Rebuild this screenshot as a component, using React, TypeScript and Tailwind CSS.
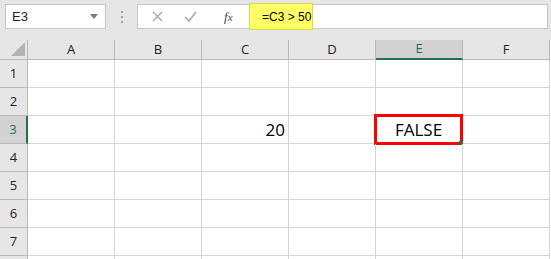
import React from 'react';

const cols = ['A', 'B', 'C', 'D', 'E', 'F'];
const rows = [1, 2, 3, 4, 5, 6, 7, 8];

export default function App() {
  return (
    <div className="w-[551px] h-[259px] overflow-hidden bg-[#e6e6e6] font-['Open_Sans',sans-serif]">
      {/* formula bar */}
      <div className="h-[40px] flex items-start pt-[4px] pl-[5px] pr-[3px]">
        <div className="w-[101px] h-[25px] bg-white border border-[#c6c6c6] flex items-center justify-between pl-[6px] pr-[7px]">
          <span className="text-[13px] text-[#222] font-['Liberation_Sans',sans-serif]">E3</span>
          <svg width="8" height="5" viewBox="0 0 8 5"><path d="M0 0h8L4 5z" fill="#7a7a7a" /></svg>
        </div>
        <div className="w-[31px] h-[25px] flex flex-col items-center justify-center gap-[3px]">
          <span className="w-[2px] h-[2px] bg-[#a0a0a0]" />
          <span className="w-[2px] h-[2px] bg-[#a0a0a0]" />
          <span className="w-[2px] h-[2px] bg-[#a0a0a0]" />
        </div>
        <div className="flex-1 h-[25px] bg-white border border-[#c6c6c6] flex items-center">
          <div className="w-[111px] flex items-center">
            <svg className="ml-[14px]" width="11" height="11" viewBox="0 0 11 11">
              <path d="M1 1l9 9M10 1l-9 9" stroke="#a8a8a8" strokeWidth="1.4" />
            </svg>
            <svg className="ml-[21px]" width="13" height="11" viewBox="0 0 13 11">
              <path d="M1 6l4 4 7-9" stroke="#a8a8a8" strokeWidth="1.6" fill="none" />
            </svg>
            <span className="ml-[27px] text-[13px] italic text-[#444] font-['Liberation_Serif',serif]">f<span className="text-[11px]">x</span></span>
          </div>
          <div className="h-[27px] -my-px w-[64px] bg-[#ffff66] border border-[#d9d94a] flex items-center pl-[12px]">
            <span className="text-[12px] text-black font-['Liberation_Sans',sans-serif] whitespace-nowrap">=C3 &gt; 50</span>
          </div>
        </div>
      </div>

      {/* sheet grid */}
      <div className="grid grid-cols-[28px_repeat(6,87px)] grid-rows-[20px_repeat(8,28px)] bg-white w-[551px]">
        <div className="bg-[#e6e6e6] border-r border-b border-[#b8b8b8] flex items-end justify-end pr-[2px] pb-[3px]">
          <svg width="14" height="14" viewBox="0 0 14 14"><path d="M14 0V14H0z" fill="#b4b4b4" /></svg>
        </div>
        {cols.map((c) => (
          <div
            key={c}
            className={
              c === 'E'
                ? 'bg-[#d3d3d3] border-r border-[#b8b8b8] border-b-2 border-b-[#217346] flex items-center justify-center text-[13px] text-[#217346]'
                : 'bg-[#e6e6e6] border-r border-b border-[#b8b8b8] flex items-center justify-center text-[13px] text-[#222]'
            }
          >
            {c}
          </div>
        ))}
        {rows.map((r) => (
          <React.Fragment key={r}>
            <div
              className={
                r === 3
                  ? 'bg-[#d3d3d3] border-r-2 border-r-[#217346] border-b border-[#b8b8b8] flex items-center justify-center text-[13px] text-[#217346]'
                  : 'bg-[#e6e6e6] border-r border-b border-[#b8b8b8] flex items-center justify-center text-[13px] text-[#222]'
              }
            >
              {r < 8 ? r : ''}
            </div>
            {cols.map((c) => (
              <div key={c} className="border-r border-b border-[#d4d4d4] relative flex items-center">
                {r === 3 && c === 'C' && (
                  <span className="ml-auto pr-[3px] text-[17px] text-black">20</span>
                )}
                {r === 3 && c === 'E' && (
                  <div className="absolute -left-[2px] -top-[2px] w-[89px] h-[31px] border-[3px] border-[#ff0000] flex items-center justify-center">
                    <span className="text-[17px] text-black">FALSE</span>
                    <span className="absolute -right-[3px] -bottom-[3px] w-[4px] h-[4px] bg-[#217346]" />
                  </div>
                )}
              </div>
            ))}
          </React.Fragment>
        ))}
      </div>
    </div>
  );
}
